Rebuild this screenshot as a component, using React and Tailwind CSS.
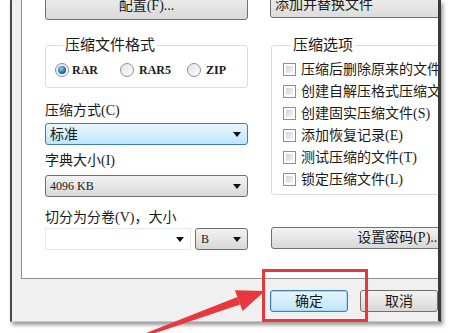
import React from "react";

const FONT = { fontFamily: '"Liberation Serif", "Noto Sans CJK SC", serif' };

function Arrow() {
  return (
    <svg width="8" height="5" viewBox="0 0 8 5" className="shrink-0">
      <path d="M0 0 H8 L4 5 Z" fill="#111" />
    </svg>
  );
}

function Radio({ checked }) {
  return (
    <span className="w-[14px] h-[14px] rounded-full border border-[#8e8f8f] bg-gradient-to-br from-[#e6e6e6] to-[#fbfbfb] flex items-center justify-center shrink-0">
      {checked && (
        <span className="w-[8px] h-[8px] rounded-full bg-[radial-gradient(circle_at_40%_35%,#8fd0f0,#1d6a9c_60%,#0d3f63)]" />
      )}
    </span>
  );
}

function Check() {
  return (
    <span className="w-[13px] h-[13px] border border-[#8e8f8f] bg-white p-[2px] shrink-0">
      <span className="block w-full h-full bg-gradient-to-br from-[#d4d4d4] to-[#f4f4f4]" />
    </span>
  );
}

function Legend({ children }) {
  return (
    <legend className="ml-[8px] px-[2px] text-[15px] leading-[18px] text-[#1a1a1a]">
      {children}
    </legend>
  );
}

export default function App() {
  const checks = [
    "压缩后删除原来的文件",
    "创建自解压格式压缩文件",
    "创建固实压缩文件(S)",
    "添加恢复记录(E)",
    "测试压缩的文件(T)",
    "锁定压缩文件(L)",
  ];
  return (
    <div className="relative w-[450px] h-[333px] bg-white overflow-hidden text-[#1a1a1a]" style={FONT}>
      {/* window */}
      <div className="ml-[10px] w-[431px] h-[322px] flex flex-col border-l-2 border-l-[#4a4a4a] border-r-[3px] border-r-[#3a3a3a] border-b border-b-[#9fd3ea] bg-[#f0f0f0] shadow-[2px_3px_4px_rgba(0,0,0,0.4)] overflow-hidden">
        {/* panel */}
        <div className="ml-[9px] h-[279px] bg-white border-l border-b border-[#8d9095] overflow-hidden pl-[23px] flex gap-[22px] shrink-0">
          {/* left column */}
          <div className="w-[203px] shrink-0 flex flex-col">
            <div className="mt-[-9px] h-[29px] rounded-[3px] border border-[#707070] bg-gradient-to-b from-[#f2f2f2] to-[#d9d9d9] flex items-center justify-center text-[14px] leading-none">
              配置(F)...
            </div>
            <fieldset className="mt-[16px] border border-[#d5dfe5] rounded-[3px] pb-[9px] pl-[9px]">
              <Legend>压缩文件格式</Legend>
              <div className="mt-[8px] h-[16px] flex items-center text-[12px] font-bold">
                <div className="w-[65px] flex items-center gap-[3px]">
                  <Radio checked />
                  <span>RAR</span>
                </div>
                <div className="w-[67px] flex items-center gap-[5px]">
                  <Radio />
                  <span>RAR5</span>
                </div>
                <div className="flex items-center gap-[5px]">
                  <Radio />
                  <span>ZIP</span>
                </div>
              </div>
            </fieldset>
            <div className="mt-[14px] text-[14px] leading-[18px]">压缩方式(C)</div>
            <div className="mt-[3px] h-[22px] rounded-[3px] border border-[#3c7fb1] bg-gradient-to-b from-[#eaf6fd] to-[#bfe5fa] flex items-center justify-between pl-[4px] pr-[6px] text-[14px]">
              <span>标准</span>
              <Arrow />
            </div>
            <div className="mt-[7px] text-[14px] leading-[18px]">字典大小(I)</div>
            <div className="mt-[5px] h-[22px] rounded-[3px] border border-[#707070] bg-gradient-to-b from-[#f3f3f3] to-[#d8d8d8] flex items-center justify-between pl-[4px] pr-[6px] text-[12px]">
              <span>4096 KB</span>
              <Arrow />
            </div>
            <div className="mt-[12px] text-[14px] leading-[18px]">切分为分卷(V)，大小</div>
            <div className="mt-[1px] flex gap-[4px]">
              <div className="w-[146px] h-[22px] border border-[#e3e9ef] bg-white flex items-center justify-end pr-[6px]">
                <Arrow />
              </div>
              <div className="flex-1 h-[22px] rounded-[3px] border border-[#707070] bg-gradient-to-b from-[#f3f3f3] to-[#d8d8d8] flex items-center justify-between pl-[5px] pr-[6px] text-[12px]">
                <span>B</span>
                <Arrow />
              </div>
            </div>
          </div>
          {/* right column */}
          <div className="w-[257px] shrink-0 flex flex-col">
            <div className="mt-[-9px] h-[27px] rounded-[3px] border border-[#707070] bg-gradient-to-b from-[#f2f2f2] to-[#dcdcdc] flex items-center pl-[4px] text-[14px] leading-none">
              添加并替换文件
            </div>
            <fieldset className="mt-[18px] ml-[1px] border border-[#d5dfe5] rounded-[3px] pb-[4px] pl-[11px]">
              <Legend>压缩选项</Legend>
              <div className="mt-[4px] flex flex-col">
                {checks.map((c) => (
                  <div key={c} className="h-[22px] flex items-center gap-[5px] text-[14px] whitespace-nowrap">
                    <Check />
                    <span>{c}</span>
                  </div>
                ))}
              </div>
            </fieldset>
            <div className="mt-[32px] ml-[1px] h-[22px] rounded-[3px] border border-[#707070] bg-gradient-to-b from-[#f3f3f3] to-[#d8d8d8] flex items-center justify-center text-[14px] leading-none">
              设置密码(P)...
            </div>
          </div>
        </div>
        {/* bottom buttons */}
        <div className="pt-[11px] pl-[258px] flex gap-[12px]">
          <div className="w-[90px] h-[22px] rounded-[3px] border border-[#3c7fb1] bg-gradient-to-b from-[#e9f6fd] to-[#c0e4f8] shadow-[inset_0_0_0_1px_#9fdcf7] flex items-center justify-center text-[14px]">
            确定
          </div>
          <div className="w-[90px] h-[22px] rounded-[3px] border border-[#707070] bg-gradient-to-b from-[#f3f3f3] to-[#d8d8d8] flex items-center justify-center text-[14px]">
            取消
          </div>
        </div>
      </div>

      {/* annotation overlay */}
      <svg className="absolute inset-0 pointer-events-none" width="450" height="333" viewBox="0 0 450 333">
        <rect x="263.5" y="270.5" width="103" height="50" fill="none" stroke="#e8383d" strokeWidth="3" />
        <polygon points="145.5,336.4 144.5,333.6 237.3,296.9 240.1,304.4" fill="#e8383d" />
        <polygon points="265,291 234.9,290.3 242.5,310.9" fill="#e8383d" />
      </svg>
    </div>
  );
}
